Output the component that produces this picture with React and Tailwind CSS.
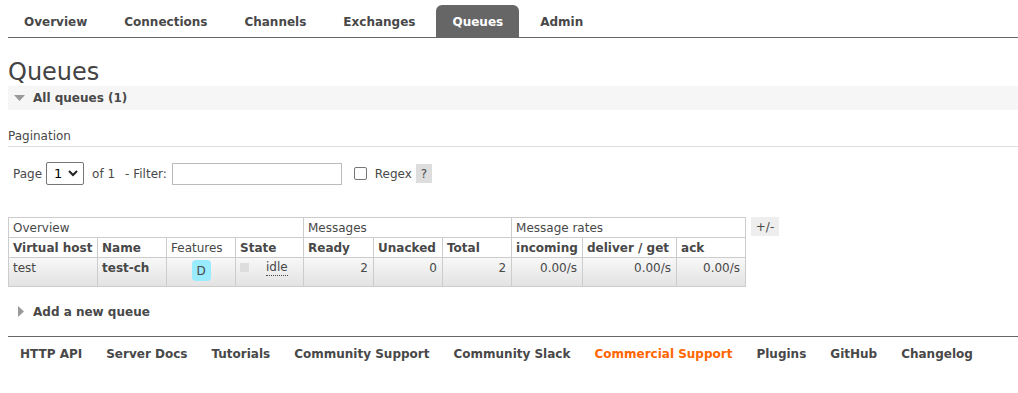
import React from 'react';

const tabs = ['Overview', 'Connections', 'Channels', 'Exchanges', 'Queues', 'Admin'];
const footerLinks = ['HTTP API', 'Server Docs', 'Tutorials', 'Community Support', 'Community Slack', 'Commercial Support', 'Plugins', 'GitHub', 'Changelog'];

export default function App() {
    return (
        <div className="pl-2 text-[12px] text-[#484848]" style={{ fontFamily: '"DejaVu Sans", Verdana, sans-serif' }}>
            {/* top menu */}
            <ul className="flex gap-[5px] pt-[5px] border-b border-[#666]">
                {tabs.map((t) => (
                    <li
                        key={t}
                        className={
                            t === 'Queues'
                                ? 'h-8 px-4 pt-[1px] flex items-center font-bold bg-[#666] text-white rounded-t-[6px]'
                                : 'h-8 px-4 pt-[1px] flex items-center font-bold'
                        }
                    >
                        {t}
                    </li>
                ))}
            </ul>

            <h1 className="text-[24px] leading-[28px] mt-[20px] text-[#444]">Queues</h1>

            <div className="h-6 bg-[#f6f6f6] flex items-center">
                <svg width="11" height="6" viewBox="0 0 11 6" className="ml-[6px] mr-[8px]">
                    <polygon points="0,0 11,0 5.5,6" fill="#999" />
                </svg>
                <span className="font-bold">All queues (1)</span>
            </div>

            <div className="mt-[19px] pb-[2px] border-b border-[#ddd]">
                <div className="leading-[15px]">Pagination</div>
            </div>

            {/* pagination row */}
            <div className="flex items-center mt-[15px] pl-[5px]">
                <span>Page</span>
                <div className="ml-1 w-[38px] h-[23px] border border-[#767676] rounded-[2px] flex items-center justify-between pl-[7px] pr-[5px] text-[13px] text-black">
                    <span>1</span>
                    <svg width="10" height="7" viewBox="0 0 10 7">
                        <polyline points="1,1 5,5 9,1" fill="none" stroke="#222" strokeWidth="2" />
                    </svg>
                </div>
                <span className="ml-2">of 1</span>
                <span className="ml-[10px]">- Filter:</span>
                <div className="ml-[5px] w-[170px] h-[22px] border border-[#bbb] bg-white" />
                <div className="ml-3 w-[13px] h-[13px] border border-[#767676] rounded-[2px] bg-white" />
                <span className="ml-[8px]">Regex</span>
                <span className="ml-[4px] w-4 h-[19px] bg-[#ddd] flex items-center justify-center">?</span>
            </div>

            {/* queues table */}
            <div className="flex items-start mt-[32px]">
                <table className="border-collapse table-fixed w-[737px]">
                    <colgroup>
                        <col className="w-[89px]" />
                        <col className="w-[69px]" />
                        <col className="w-[69px]" />
                        <col className="w-[68px]" />
                        <col className="w-[70px]" />
                        <col className="w-[69px]" />
                        <col className="w-[69px]" />
                        <col className="w-[71px]" />
                        <col className="w-[94px]" />
                        <col className="w-[69px]" />
                    </colgroup>
                    <thead>
                        <tr className="h-5">
                            <th colSpan={4} className="border border-[#ccc] font-normal text-left px-[4px] py-0">Overview</th>
                            <th colSpan={3} className="border border-[#ccc] font-normal text-left px-[4px] py-0">Messages</th>
                            <th colSpan={3} className="border border-[#ccc] font-normal text-left px-[4px] py-0">Message rates</th>
                        </tr>
                        <tr className="h-5">
                            <th className="border border-[#ccc] text-left px-[4px] py-0 whitespace-nowrap overflow-hidden">Virtual host</th>
                            <th className="border border-[#ccc] text-left px-[4px] py-0">Name</th>
                            <th className="border border-[#ccc] text-left px-[4px] py-0 font-normal">Features</th>
                            <th className="border border-[#ccc] text-left px-[4px] py-0">State</th>
                            <th className="border border-[#ccc] text-left px-[4px] py-0">Ready</th>
                            <th className="border border-[#ccc] text-left px-[4px] py-0">Unacked</th>
                            <th className="border border-[#ccc] text-left px-[4px] py-0">Total</th>
                            <th className="border border-[#ccc] text-left px-[4px] py-0">incoming</th>
                            <th className="border border-[#ccc] text-left px-[4px] py-0 whitespace-nowrap">deliver / get</th>
                            <th className="border border-[#ccc] text-left px-[4px] py-0">ack</th>
                        </tr>
                    </thead>
                    <tbody>
                        <tr className="h-[29px] bg-gradient-to-b from-[#f8f8f8] to-[#e2e2e2]">
                            <td className="border border-[#ccc] align-top px-[4px] pt-[1px]">test</td>
                            <td className="border border-[#ccc] align-top px-[4px] pt-[1px] font-bold">test-ch</td>
                            <td className="border border-[#ccc] align-top pt-[2px]">
                                <div className="flex justify-center">
                                    <span className="w-[19px] h-[21px] rounded-[4px] bg-[#99ebff] flex items-center justify-center">D</span>
                                </div>
                            </td>
                            <td className="border border-[#ccc] align-top px-[4px] pt-[5px]">
                                <div className="flex items-start">
                                    <span className="w-[9px] h-[9px] bg-[#ddd]" />
                                    <span className="ml-[17px] -mt-[3px] border-b border-dotted border-[#484848] leading-[15px]">idle</span>
                                </div>
                            </td>
                            <td className="border border-[#ccc] align-top px-[5px] pt-[1px] text-right">2</td>
                            <td className="border border-[#ccc] align-top px-[5px] pt-[1px] text-right">0</td>
                            <td className="border border-[#ccc] align-top px-[5px] pt-[1px] text-right">2</td>
                            <td className="border border-[#ccc] align-top px-[5px] pt-[1px] text-right">0.00/s</td>
                            <td className="border border-[#ccc] align-top px-[5px] pt-[1px] text-right">0.00/s</td>
                            <td className="border border-[#ccc] align-top px-[5px] pt-[1px] text-right">0.00/s</td>
                        </tr>
                    </tbody>
                </table>
                <span className="ml-[5px] w-[28px] h-[19px] bg-[#eee] flex items-center justify-center">+/-</span>
            </div>

            <div className="flex items-center mt-[17px] h-[15px]">
                <svg width="6" height="11" viewBox="0 0 6 11" className="ml-[10px] mr-[9px]">
                    <polygon points="0,0 6,5.5 0,11" fill="#999" />
                </svg>
                <span className="font-bold">Add a new queue</span>
            </div>

            {/* footer */}
            <div className="mt-[17px] border-t border-[#666] flex gap-6 pl-3 pt-[8px] font-bold">
                {footerLinks.map((l) => (
                    <span key={l} className={l === 'Commercial Support' ? 'text-[#ff6600]' : ''}>
                        {l}
                    </span>
                ))}
            </div>
        </div>
    );
}
